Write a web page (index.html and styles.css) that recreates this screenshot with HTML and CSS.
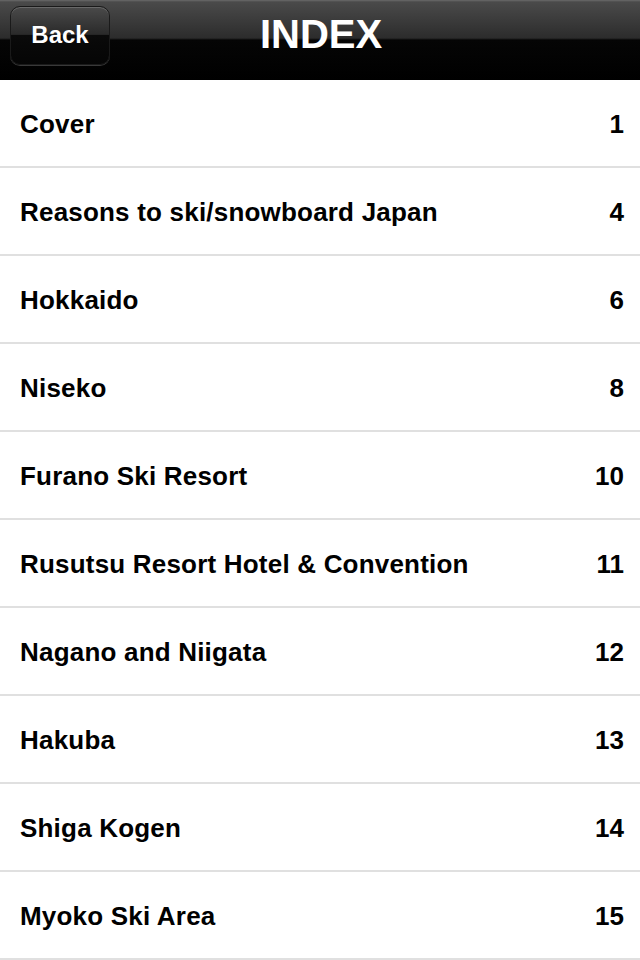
FILE: index.html
```html
<!DOCTYPE html>
<html>
<head>
<meta charset="utf-8">
<link rel="stylesheet" href="styles.css">
</head>
<body>
<header class="navbar">
  <button class="back">Back</button>
  <h1 class="title">INDEX</h1>
</header>
<ul class="index">
  <li class="row"><span class="label">Cover</span><span class="page">1</span></li>
  <li class="row"><span class="label">Reasons to ski/snowboard Japan</span><span class="page">4</span></li>
  <li class="row"><span class="label">Hokkaido</span><span class="page">6</span></li>
  <li class="row"><span class="label">Niseko</span><span class="page">8</span></li>
  <li class="row"><span class="label">Furano Ski Resort</span><span class="page">10</span></li>
  <li class="row"><span class="label">Rusutsu Resort Hotel &amp; Convention</span><span class="page">11</span></li>
  <li class="row"><span class="label">Nagano and Niigata</span><span class="page">12</span></li>
  <li class="row"><span class="label">Hakuba</span><span class="page">13</span></li>
  <li class="row"><span class="label">Shiga Kogen</span><span class="page">14</span></li>
  <li class="row"><span class="label">Myoko Ski Area</span><span class="page">15</span></li>
</ul>
</body>
</html>
```
FILE: styles.css
```css
html, body {
  margin: 0;
  padding: 0;
  background: #ffffff;
  font-family: "Liberation Sans", Arial, sans-serif;
}
.navbar {
  position: relative;
  height: 80px;
  box-sizing: border-box;
  display: flex;
  align-items: center;
  justify-content: center;
  background: linear-gradient(to bottom, #6a6a6a 0px, #4a4a4a 2px, #2c2c2c 38px, #050505 40px, #000000 80px);
}
.back {
  position: absolute;
  left: 10px;
  top: 6px;
  width: 100px;
  height: 59px;
  border-radius: 10px;
  border: 1px solid #1a1a1a;
  box-shadow: 0 1px 0 rgba(255,255,255,0.22), inset 0 1px 0 rgba(255,255,255,0.18);
  background: linear-gradient(to bottom, #4a4a4a 0%, #2a2a2a 48%, #0a0a0a 50%, #050505 100%);
  color: #ffffff;
  font-family: "Liberation Sans", Arial, sans-serif;
  font-weight: bold;
  font-size: 24px;
  padding: 0 0 2px 0;
}
.title {
  margin: 0;
  color: #ffffff;
  font-size: 40px;
  font-weight: bold;
  margin-top: -12px;
  margin-left: 2px;
}
.index {
  list-style: none;
  margin: 0;
  padding: 0;
}
.row {
  height: 88px;
  box-sizing: border-box;
  border-bottom: 2px solid #e0e0e0;
  display: flex;
  align-items: center;
  justify-content: space-between;
  padding: 2px 16px 0 20px;
  font-size: 26px;
  letter-spacing: 0.2px;
  font-weight: bold;
  color: #000000;
}
.page {
  letter-spacing: 0;
}
```
